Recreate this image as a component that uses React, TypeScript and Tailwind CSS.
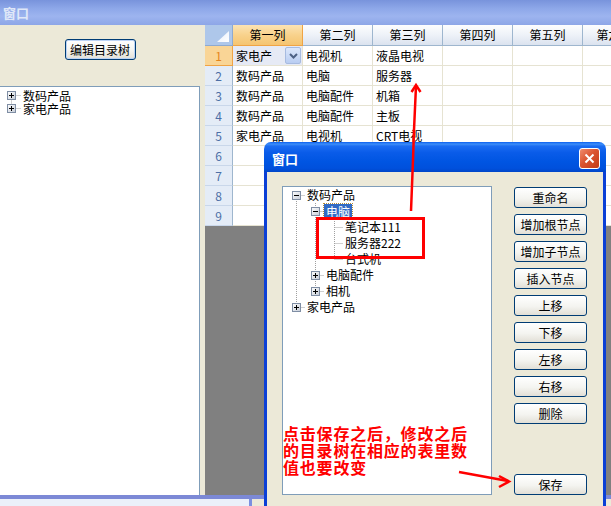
import React from 'react';

function ExpBox({ open }: { open: boolean }) {
  return (
    <svg width="9" height="9" viewBox="0 0 9 9" className="block shrink-0 relative">
      <defs>
        <linearGradient id="ebg" x1="0" y1="0" x2="1" y2="1">
          <stop offset="0" stopColor="#ffffff" />
          <stop offset="1" stopColor="#c4cbd6" />
        </linearGradient>
      </defs>
      <rect x="0.5" y="0.5" width="8" height="8" fill="url(#ebg)" stroke="#7f8ea4" />
      <rect x="2" y="4" width="5" height="1" fill="#000" />
      {!open && <rect x="4" y="2" width="1" height="5" fill="#000" />}
    </svg>
  );
}

type Node = { level: number; box?: 'open' | 'closed'; text: string; selected?: boolean };

const dlgIndent = ['w-[9px]', 'w-[28px]', 'w-[47px]'];

function TreeRow({ n, indent, rowH, gap, lead }: { n: Node; indent: string[]; rowH: string; gap: string; lead: string }) {
  return (
    <div className={`relative flex items-center ${rowH}`}>
      <div className={`${indent[n.level]} shrink-0`} />
      <div className="w-[9px] h-[9px] shrink-0">{n.box && <ExpBox open={n.box === 'open'} />}</div>
      <div className={`${gap} shrink-0`} />
      {n.selected ? (
        <span className="px-[2px] h-[15px] leading-[15px] bg-[#316ac5] text-white outline-1 outline-dotted outline-[#b08a3a] whitespace-nowrap">
          {n.text}
        </span>
      ) : (
        <span className={`px-[2px] ${lead} whitespace-nowrap`}>{n.text}</span>
      )}
    </div>
  );
}

function XPButton({ label, className = '' }: { label: string; className?: string }) {
  return (
    <div
      className={`h-[21px] w-[73px] shrink-0 rounded-[3px] border border-[#003c74] bg-[linear-gradient(to_bottom,#ffffff,#f4f4f0_55%,#e2dfd6)] flex items-center justify-center text-[12px] leading-none text-black ${className}`}
    >
      {label}
    </div>
  );
}

const cols = ['第一列', '第二列', '第三列', '第四列', '第五列', '第六列'];
const colW = ['w-[70px]', 'w-[70px]', 'w-[70px]', 'w-[70px]', 'w-[70px]', 'w-[64px]'];
const data: string[][] = [
  ['家电产', '电视机', '液晶电视'],
  ['数码产品', '电脑', '服务器'],
  ['数码产品', '电脑配件', '机箱'],
  ['数码产品', '电脑配件', '主板'],
  ['家电产品', '电视机', 'CRT电视'],
  [],
  [],
  [],
  [],
];

const dlgTree: Node[] = [
  { level: 0, box: 'open', text: '数码产品' },
  { level: 1, box: 'open', text: '电脑', selected: true },
  { level: 2, text: '笔记本111' },
  { level: 2, text: '服务器222' },
  { level: 2, text: '台式机' },
  { level: 1, box: 'closed', text: '电脑配件' },
  { level: 1, box: 'closed', text: '相机' },
  { level: 0, box: 'closed', text: '家电产品' },
];

export default function App() {
  return (
    <div className="relative w-[611px] h-[506px] overflow-hidden bg-[#ece9d8] font-['Noto_Sans_CJK_SC','Noto_Sans_CJK_JP',sans-serif] text-[12px] text-black">
      {/* outer title bar */}
      <div className="h-[25px] bg-[linear-gradient(to_bottom,#7893dc,#8ea8e9_35%,#9db4ef_65%,#8da6e7)] flex items-center pl-[3px]">
        <span className="text-[13px] font-bold text-[#dfe7f8] leading-none">窗口</span>
      </div>

      {/* body */}
      <div className="flex h-[470px]">
        {/* left panel */}
        <div className="w-[200px] shrink-0 flex flex-col">
          <div className="h-[61px] flex justify-center pt-[14px]">
            <div className="h-[21px] w-[71px] rounded-[3px] border border-[#003c74] shadow-[inset_0_0_0_1px_#bcd3f5] bg-[linear-gradient(to_bottom,#ffffff,#f4f4f0_55%,#e2dfd6)] flex items-center justify-center leading-none">
              编辑目录树
            </div>
          </div>
          <div className="relative flex-1 bg-white border-t border-r border-[#7f9db9] pt-[2px]">
            <svg className="absolute left-0 top-0" width="199" height="40">
              <line x1="11.5" y1="8.5" x2="11.5" y2="21.5" stroke="#a0a0a0" strokeDasharray="1 1" />
              <line x1="11.5" y1="8.5" x2="21" y2="8.5" stroke="#a0a0a0" strokeDasharray="1 1" />
              <line x1="11.5" y1="21.5" x2="21" y2="21.5" stroke="#a0a0a0" strokeDasharray="1 1" />
            </svg>
            <TreeRow n={{ level: 0, box: 'closed', text: '数码产品' }} indent={['w-[7px]']} rowH="h-[13px]" gap="w-[5px]" lead="leading-[13px]" />
            <TreeRow n={{ level: 0, box: 'closed', text: '家电产品' }} indent={['w-[7px]']} rowH="h-[13px]" gap="w-[5px]" lead="leading-[13px]" />
          </div>
        </div>
        <div className="w-[5px] shrink-0" />

        {/* grid */}
        <div className="flex-1 bg-[#808080] overflow-hidden flex flex-col">
          <div className="flex h-[21px] shrink-0">
            <div className="w-[28px] shrink-0 bg-[#aec7ea] border-r border-b border-[#8eaad0] flex items-end justify-end pr-[3px] pb-[3px]">
              <svg width="12" height="11" viewBox="0 0 12 11">
                <defs>
                  <linearGradient id="tri" x1="0" y1="0" x2="1" y2="1">
                    <stop offset="0" stopColor="#e6eefa" />
                    <stop offset="1" stopColor="#ffffff" />
                  </linearGradient>
                </defs>
                <polygon points="12,0 12,11 0,11" fill="url(#tri)" />
              </svg>
            </div>
            {cols.map((c, i) => (
              <div
                key={c}
                className={`${colW[i]} shrink-0 border-r border-b flex items-center justify-center whitespace-nowrap overflow-hidden ${
                  i === 0
                    ? 'bg-[linear-gradient(to_bottom,#fce3b4,#f8d28c_50%,#f5c471)] border-[#f0a444]'
                    : 'bg-[linear-gradient(to_bottom,#fdfdfe,#eef2f8_50%,#dbe3ef)] border-[#9eb6ce]'
                }`}
              >
                {c}
              </div>
            ))}
          </div>
          {data.map((r, ri) => (
            <div key={ri} className="flex h-[20px] shrink-0">
              <div
                className={`w-[28px] shrink-0 border-r border-b flex items-center justify-center ${
                  ri === 0
                    ? 'bg-[#f9d596] text-[#e5851c] border-[#f0a444]'
                    : 'bg-[#e4ecf7] text-[#4d6fa6] border-r-[#9eb6ce] border-b-[#c9d7ea]'
                }`}
              >
                {ri + 1}
              </div>
              {cols.map((_, ci) => (
                <div
                  key={ci}
                  className={`${colW[ci]} shrink-0 border-r border-b border-[#e6e3d2] flex items-center pl-[3px] whitespace-nowrap overflow-hidden ${
                    ri === 0 && ci === 0 ? 'bg-[#e6eaf5] justify-between pr-[1px]' : 'bg-white'
                  }`}
                >
                  <span>{r[ci] ?? ''}</span>
                  {ri === 0 && ci === 0 && (
                    <div className="w-[16px] h-[17px] rounded-[2px] border border-[#a7bbe0] bg-[linear-gradient(to_bottom,#dce7fb,#b9cdf2)] flex items-center justify-center">
                      <svg width="9" height="6" viewBox="0 0 9 6">
                        <polyline points="1,1 4.5,4.5 8,1" fill="none" stroke="#4d6185" strokeWidth="2" />
                      </svg>
                    </div>
                  )}
                </div>
              ))}
            </div>
          ))}
        </div>
      </div>

      {/* bottom strip */}
      <div className="h-[11px] border-t-4 border-[#7c89d6] flex">
        <div className="w-[249px] bg-[#ebf0fa]" />
        <div className="w-[3px] bg-[#7b8fe0]" />
        <div className="flex-1 bg-[#ece9d8]" />
      </div>

      {/* dialog */}
      <div className="absolute left-[264px] top-[142px] w-[342px] h-[380px] flex flex-col rounded-t-[7px] overflow-hidden">
        <div className="h-[30px] shrink-0 bg-[linear-gradient(to_bottom,#0a5ff0_0%,#3d8ef8_7%,#1b6cf2_14%,#0a5ce9_35%,#0055e2_65%,#0050dc_88%,#0046c8_100%)] flex items-center justify-between pl-[8px] pr-[6px] pt-[3px]">
          <span className="text-[13px] font-bold text-white leading-none">窗口</span>
          <div className="w-[21px] h-[21px] rounded-[3px] border border-white bg-[linear-gradient(135deg,#ef8c6e,#db5430_45%,#c23a16)] flex items-center justify-center">
            <svg width="11" height="11" viewBox="0 0 11 11">
              <line x1="1.5" y1="1.5" x2="9.5" y2="9.5" stroke="#fff" strokeWidth="2" />
              <line x1="9.5" y1="1.5" x2="1.5" y2="9.5" stroke="#fff" strokeWidth="2" />
            </svg>
          </div>
        </div>
        <div className="flex-1 bg-[#ece9d8] border-x-[3px] border-x-[#0a3fd6] flex pl-[15px] pt-[14px]">
          <div className="relative w-[210px] h-[309px] shrink-0 bg-white border border-[#7f9db9]">
            <svg className="absolute left-0 top-0" width="208" height="140">
              <g stroke="#a0a0a0" strokeDasharray="1 1">
                <line x1="13.5" y1="8" x2="13.5" y2="120" />
                <line x1="32.5" y1="16" x2="32.5" y2="104" />
                <line x1="51.5" y1="32" x2="51.5" y2="72" />
                {dlgTree.map((n, i) => (
                  <line key={i} x1={13.5 + 19 * n.level} y1={8.5 + 16 * i} x2={22 + 19 * n.level} y2={8.5 + 16 * i} />
                ))}
              </g>
            </svg>
            {dlgTree.map((n, i) => (
              <TreeRow key={i} n={n} indent={dlgIndent} rowH="h-[16px]" gap="w-[4px]" lead="leading-[14px]" />
            ))}
          </div>
          <div className="ml-[22px] mt-[1px] flex flex-col gap-[6px]">
            {['重命名', '增加根节点', '增加子节点', '插入节点', '上移', '下移', '左移', '右移', '删除'].map((b) => (
              <XPButton key={b} label={b} />
            ))}
            <XPButton label="保存" className="mt-[44px]" />
          </div>
        </div>
      </div>

      {/* annotation text */}
      <div className="absolute left-[283px] top-[425px] text-[#ff0000] font-bold text-[16px] leading-[17px] tracking-[0.8px] whitespace-nowrap">
        <div>点击保存之后，修改之后</div>
        <div>的目录树在相应的表里数</div>
        <div>值也要改变</div>
      </div>

      {/* annotation drawing */}
      <svg className="absolute left-0 top-0 pointer-events-none" width="611" height="506">
        <rect x="317.5" y="218.5" width="106" height="39" fill="none" stroke="#ff0000" strokeWidth="3" />
        <polyline points="416,86 414,130 413,160 411,211" fill="none" stroke="#ff0000" strokeWidth="2.5" />
        <polyline points="411.5,92 416,85 420.5,92" fill="none" stroke="#ff0000" strokeWidth="2.5" />
        <line x1="459" y1="472" x2="508" y2="481" stroke="#ff0000" strokeWidth="2.5" />
        <polyline points="499,476 509,481.5 499,487" fill="none" stroke="#ff0000" strokeWidth="2.5" />
      </svg>
    </div>
  );
}
